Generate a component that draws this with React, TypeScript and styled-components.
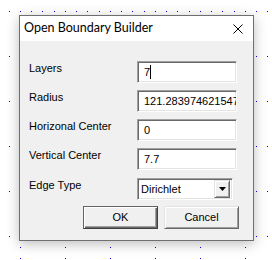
import React from "react";
import styled, { createGlobalStyle } from "styled-components";

const GlobalStyle = createGlobalStyle`
  html, body { margin: 0; padding: 0; background: #ffffff; }
  body { width: 272px; height: 260px; overflow: hidden; }
`;

const Desktop = styled.div`
  position: relative;
  width: 272px;
  height: 260px;
  overflow: hidden;
  background: #ffffff;
`;

const DotCanvas = styled.svg`
  display: block;
`;

const Window = styled.div`
  position: absolute;
  left: 19px;
  top: 15px;
  width: 235px;
  height: 226px;
  box-sizing: border-box;
  border: 1px solid #6f6f6f;
  background: #f0f0f0;
  box-shadow: 0 3px 12px rgba(0, 0, 0, 0.26);
  display: flex;
  flex-direction: column;
`;

const TitleBar = styled.div`
  height: 25px;
  flex: none;
  background: #ffffff;
  display: flex;
  align-items: center;
  justify-content: space-between;
  padding: 0 10px 1px 4px;
  box-sizing: border-box;
`;

const Title = styled.span`
  font-family: Lato, "Noto Sans", sans-serif;
  font-size: 12.5px;
  line-height: 16px;
  color: #000000;
`;

const CloseIcon = styled.svg`
  display: block;
  margin-top: 1px;
`;

const Body = styled.div`
  flex: 1;
  padding: 20px 14px 10px 9px;
  display: flex;
  flex-direction: column;
  font-family: "Liberation Sans", Arial, sans-serif;
  font-size: 11px;
  color: #000000;
`;

const Form = styled.div`
  display: grid;
  grid-template-columns: 108px auto;
  grid-auto-rows: 22px;
  row-gap: 7px;
`;

const Label = styled.div<{ $shift?: number }>`
  line-height: 13px;
  padding-top: ${(p) => 1 + (p.$shift ?? 0)}px;
  white-space: nowrap;
`;

const sunken = `
  box-sizing: border-box;
  border-top: 1px solid #a0a0a0;
  border-left: 1px solid #a0a0a0;
  border-bottom: 1px solid #ffffff;
  border-right: 1px solid #ffffff;
  box-shadow: inset 1px 1px 0 #696969, inset -1px -1px 0 #e3e3e3;
  background: #ffffff;
`;

const TextBox = styled.div`
  ${sunken}
  width: 100px;
  height: 22px;
  padding: 3px 2px 0 6px;
  line-height: 15px;
  white-space: nowrap;
  overflow: hidden;
`;

const Caret = styled.span`
  display: inline-block;
  width: 0;
  height: 14px;
  border-left: 1px solid #000000;
  vertical-align: -3px;
`;

const Combo = styled.div`
  ${sunken}
  width: 96px;
  height: 22px;
  margin-top: 1px;
  padding: 2px 2px 2px 3px;
  display: flex;
  align-items: center;
  justify-content: space-between;
`;

const ComboText = styled.span`
  line-height: 15px;
  padding-top: 1px;
`;

const ComboButton = styled.div`
  width: 16px;
  height: 18px;
  box-sizing: border-box;
  background: #f0f0f0;
  border-top: 1px solid #e3e3e3;
  border-left: 1px solid #e3e3e3;
  border-bottom: 1px solid #696969;
  border-right: 1px solid #696969;
  box-shadow: inset 1px 1px 0 #ffffff, inset -1px -1px 0 #a0a0a0;
  display: flex;
  align-items: center;
  justify-content: center;
`;

const ButtonRow = styled.div`
  margin-top: 7px;
  display: flex;
  justify-content: flex-end;
  gap: 6px;
`;

const Button = styled.button<{ $default?: boolean }>`
  width: 75px;
  height: 23px;
  box-sizing: border-box;
  margin: 0;
  padding: 0 0 1px 0;
  font-family: "Liberation Sans", Arial, sans-serif;
  font-size: 11px;
  color: #000000;
  background: #f0f0f0;
  border-top: 1px solid ${(p) => (p.$default ? "#646464" : "#e3e3e3")};
  border-left: 1px solid ${(p) => (p.$default ? "#646464" : "#e3e3e3")};
  border-bottom: 1px solid ${(p) => (p.$default ? "#404040" : "#696969")};
  border-right: 1px solid ${(p) => (p.$default ? "#404040" : "#696969")};
  box-shadow: ${(p) =>
    p.$default
      ? "inset 1px 1px 0 #ffffff, inset -1px -1px 0 #696969, inset -2px -2px 0 #a0a0a0"
      : "inset 1px 1px 0 #ffffff, inset -1px -1px 0 #a0a0a0"};
`;

function dots() {
  const out: { x: number; y: number }[] = [];
  const rowsY = [0, 1, 2, 3, 4, 5].map((k) => 11 + 45 * k);
  for (const y of rowsY) {
    for (let m = 0; m < 24; m++) out.push({ x: Math.floor(9 + 11.25 * m), y });
  }
  for (let k = 0; k < 6; k++) {
    const x = Math.floor(20.25 + 45 * k);
    for (let n = 0; n < 23; n++) out.push({ x, y: Math.floor(11 + 11.25 * n) });
  }
  return out;
}

const fields = [
  { label: "Layers", value: "7", caret: true },
  { label: "Radius", value: "121.283974621547" },
  { label: "Horizonal Center", value: "0" },
  { label: "Vertical Center", value: "7.7" },
];

export default function App() {
  const pts = dots();
  return (
    <>
      <GlobalStyle />
      <Desktop>
        <DotCanvas width={272} height={260} viewBox="0 0 272 260">
          {pts.map((p, i) => (
            <rect key={i} x={p.x} y={p.y} width={1} height={1} fill="#0000ee" />
          ))}
        </DotCanvas>
        <Window>
          <TitleBar>
            <Title>Open Boundary Builder</Title>
            <CloseIcon width={10} height={10} viewBox="0 0 10 10">
              <path d="M0.5 0.5 L9.5 9.5 M9.5 0.5 L0.5 9.5" stroke="#000" strokeWidth={1} fill="none" />
            </CloseIcon>
          </TitleBar>
          <Body>
            <Form>
              {fields.map((f) => (
                <React.Fragment key={f.label}>
                  <Label>{f.label}</Label>
                  <TextBox>
                    {f.value}
                    {f.caret && <Caret />}
                  </TextBox>
                </React.Fragment>
              ))}
              <Label $shift={1}>Edge Type</Label>
              <Combo>
                <ComboText>Dirichlet</ComboText>
                <ComboButton>
                  <svg width={7} height={4} viewBox="0 0 7 4">
                    <path d="M0 0 H7 L3.5 4 Z" fill="#000" />
                  </svg>
                </ComboButton>
              </Combo>
            </Form>
            <ButtonRow>
              <Button $default>OK</Button>
              <Button>Cancel</Button>
            </ButtonRow>
          </Body>
        </Window>
      </Desktop>
    </>
  );
}
